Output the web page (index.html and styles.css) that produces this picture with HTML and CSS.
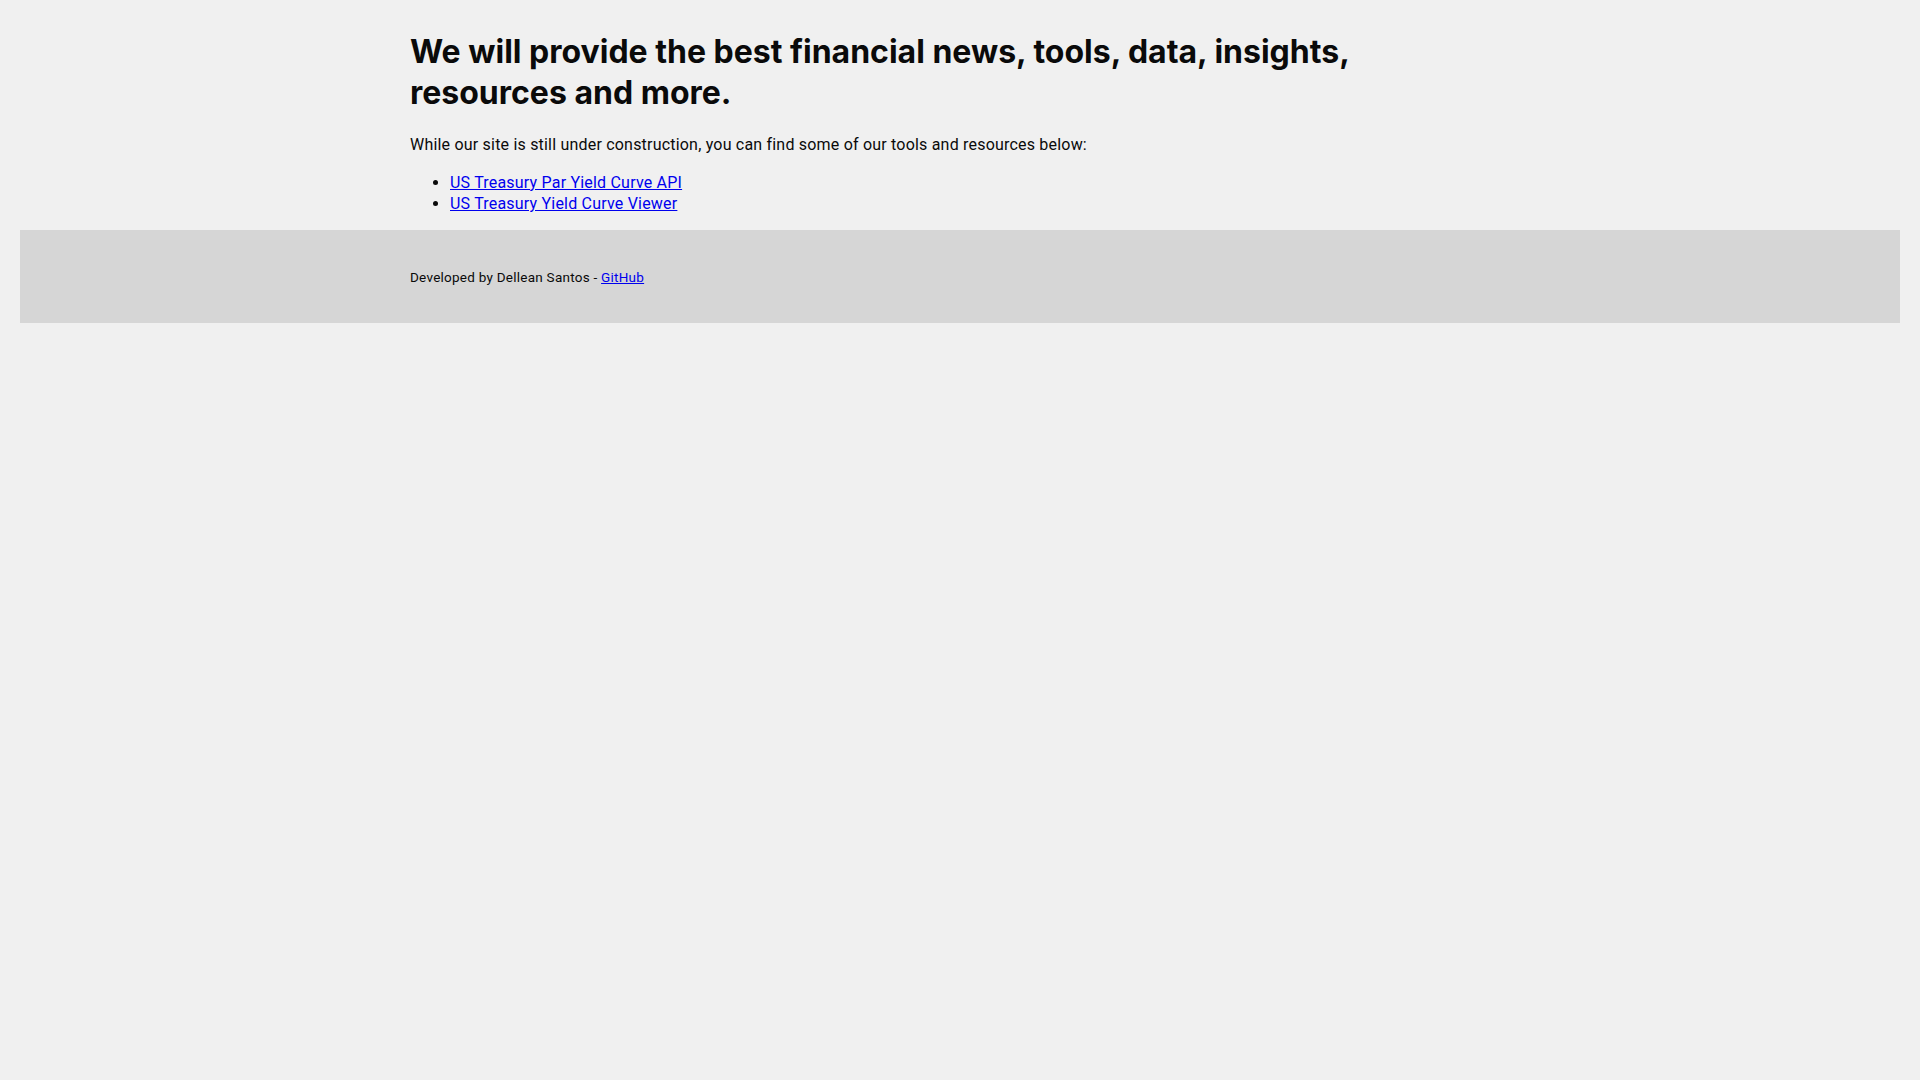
FILE: index.html
```html
<!DOCTYPE html>
<html lang="en">
<head>
<meta charset="utf-8">
<title>Financial News, Tools and Data</title>
<link rel="stylesheet" href="styles.css">
</head>
<body>
<main class="wrap">
  <h1 class="title">We will provide the best financial news, tools, data, insights, resources and more.</h1>
  <p class="lead">While our site is still under construction, you can find some of our tools and resources below:</p>
  <ul class="links">
    <li><a href="#">US Treasury Par Yield Curve API</a></li>
    <li><a href="#">US Treasury Yield Curve Viewer</a></li>
  </ul>
</main>
<footer class="footer">
  <div class="footer-inner">Developed by Dellean Santos - <a href="#">GitHub</a></div>
</footer>
</body>
</html>
```

FILE: styles.css
```css
html, body {
  margin: 0;
  padding: 0;
  background: #f0f0f0;
  color: #0a0a0a;
  font-family: Roboto, "Liberation Sans", sans-serif;
}
.wrap {
  max-width: 1100px;
  margin: 0 auto;
  padding-top: 11px;
}
.title {
  font-family: Inter, Roboto, sans-serif;
  font-size: 32px;
  line-height: 40.5px;
  font-weight: 700;
  margin: 21.2px 0;
  max-width: 1050px;
  letter-spacing: 0;
}
.lead {
  font-size: 16px;
  line-height: 21.6px;
  margin: 16px 0;
  letter-spacing: 0.2px;
}
.links {
  font-size: 16px;
  line-height: 21.2px;
  margin: 16px 0;
  padding-left: 40px;
  letter-spacing: 0.2px;
}
a { color: #0000ee; }
.footer {
  margin: 0 20px;
  background: #d6d6d6;
  padding: 39px 0 37px;
}
.footer-inner {
  max-width: 1100px;
  margin: 0 auto;
  font-size: 13.5px;
  line-height: 17px;
  letter-spacing: 0.25px;
}
```
